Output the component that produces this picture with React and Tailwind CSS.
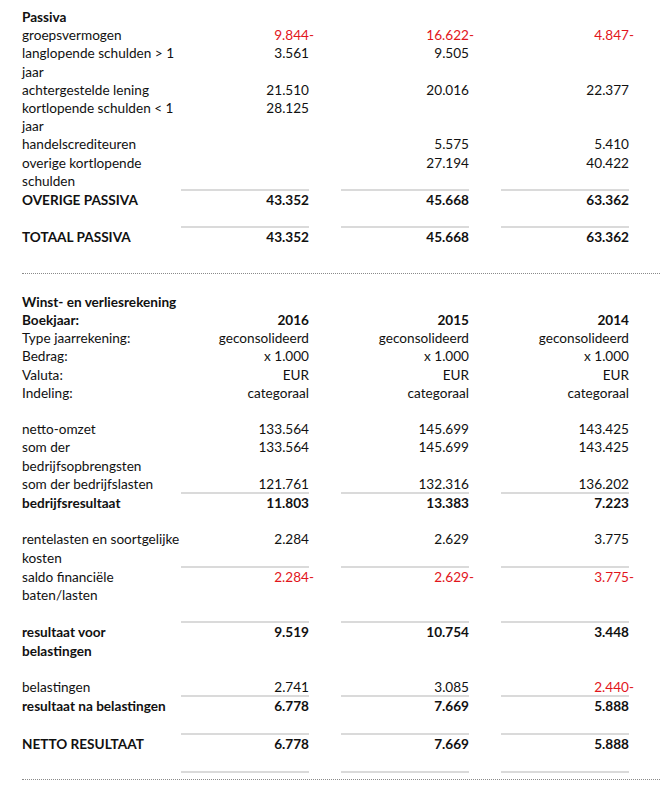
import React from "react";

const RED = "text-[#e2151c]";

function Val({ v }) {
  if (!v) return null;
  if (v.endsWith("-")) {
    return (
      <span className={RED}>
        {v.slice(0, -1)}
        <span className="mr-[-5px]">-</span>
      </span>
    );
  }
  return <span>{v}</span>;
}

function Row({ label, values = ["", "", ""], bold, line }) {
  const lines = label.split("\n");
  return (
    <div className={`flex items-start ${line ? "mt-[-1px]" : ""} ${bold ? "font-bold" : ""}`}>
      <div className={`w-[159px] shrink-0 whitespace-nowrap ${line ? "border-t-2 border-transparent" : ""}`}>
        {lines.map((l, i) => (
          <div key={i}>{l}</div>
        ))}
      </div>
      {values.map((v, i) => (
        <div key={i} className="w-[160px] shrink-0 pr-[32px]">
          <div className={`text-right whitespace-nowrap ${line ? "border-t-2 border-[#dadada]" : ""}`}>
            <Val v={v} />
            {!v && "\u00a0"}
          </div>
        </div>
      ))}
    </div>
  );
}

function Blank() {
  return <div className="h-[18.2px]" />;
}

function Head({ children }) {
  return <div className="font-bold">{children}</div>;
}

export default function App() {
  return (
    <div
      className="bg-white text-[#111] text-[13.6px] leading-[18.2px] px-[22px] w-[669px] min-h-[791px]"
      style={{ fontFamily: "Lato, 'Noto Sans', sans-serif" }}
    >
      <div className="w-[638px] pt-[8px] pb-[8px] border-b border-dotted border-[#8a8a8a]">
        <Head>Passiva</Head>
        <Row label="groepsvermogen" values={["9.844-", "16.622-", "4.847-"]} />
        <Row label={"langlopende schulden > 1\njaar"} values={["3.561", "9.505", ""]} />
        <Row label="achtergestelde lening" values={["21.510", "20.016", "22.377"]} />
        <Row label={"kortlopende schulden < 1\njaar"} values={["28.125", "", ""]} />
        <Row label="handelscrediteuren" values={["", "5.575", "5.410"]} />
        <Row label={"overige kortlopende\nschulden"} values={["", "27.194", "40.422"]} />
        <Row label="OVERIGE PASSIVA" values={["43.352", "45.668", "63.362"]} bold line />
        <Blank />
        <Row label="TOTAAL PASSIVA" values={["43.352", "45.668", "63.362"]} bold line />
        <Blank />
      </div>

      <div className="w-[638px] pt-[19px] border-b border-dotted border-[#8a8a8a]">
        <Head>Winst- en verliesrekening</Head>
        <Row label="Boekjaar:" values={["2016", "2015", "2014"]} bold />
        <Row label="Type jaarrekening:" values={["geconsolideerd", "geconsolideerd", "geconsolideerd"]} />
        <Row label="Bedrag:" values={["x 1.000", "x 1.000", "x 1.000"]} />
        <Row label="Valuta:" values={["EUR", "EUR", "EUR"]} />
        <Row label="Indeling:" values={["categoraal", "categoraal", "categoraal"]} />
        <Blank />
        <Row label="netto-omzet" values={["133.564", "145.699", "143.425"]} />
        <Row label={"som der\nbedrijfsopbrengsten"} values={["133.564", "145.699", "143.425"]} />
        <Row label="som der bedrijfslasten" values={["121.761", "132.316", "136.202"]} />
        <Row label="bedrijfsresultaat" values={["11.803", "13.383", "7.223"]} bold line />
        <Blank />
        <Row label={"rentelasten en soortgelijke\nkosten"} values={["2.284", "2.629", "3.775"]} />
        <Row label={"saldo financiële\nbaten/lasten"} values={["2.284-", "2.629-", "3.775-"]} line />
        <Blank />
        <Row label={"resultaat voor\nbelastingen"} values={["9.519", "10.754", "3.448"]} bold line />
        <Blank />
        <Row label="belastingen" values={["2.741", "3.085", "2.440-"]} />
        <Row label="resultaat na belastingen" values={["6.778", "7.669", "5.888"]} bold line />
        <Blank />
        <Row label="NETTO RESULTAAT" values={["6.778", "7.669", "5.888"]} bold line />
        <Blank />
        <div className="flex">
          <div className="w-[159px] shrink-0" />
          {[0, 1, 2].map((i) => (
            <div key={i} className="w-[160px] shrink-0 pr-[32px]">
              <div className="border-t-2 border-[#dadada] h-[8px]" />
            </div>
          ))}
        </div>
      </div>
    </div>
  );
}
